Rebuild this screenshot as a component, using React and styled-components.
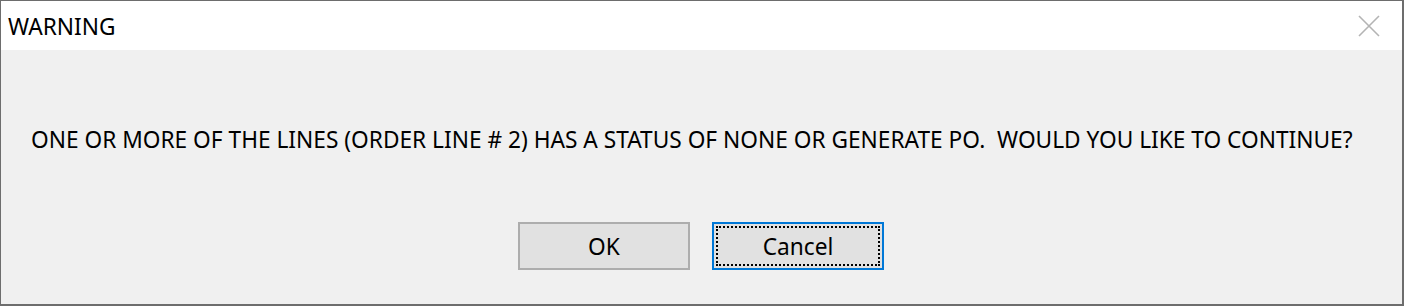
import React from "react";
import styled, { createGlobalStyle } from "styled-components";

const GlobalStyle = createGlobalStyle`
  html, body {
    margin: 0;
    padding: 0;
    background: #6d6d6d;
  }
  #root {
    width: 1404px;
    height: 306px;
    padding: 1px 2px 2px 1px;
    box-sizing: border-box;
  }
`;

const Dialog = styled.div`
  width: 100%;
  height: 100%;
  display: flex;
  flex-direction: column;
  background: #f0f0f0;
  font-family: "Noto Sans", "Open Sans", sans-serif;
  color: #000;
`;

const TitleBar = styled.div`
  height: 49px;
  background: #fff;
  display: flex;
  align-items: center;
  justify-content: space-between;
  padding: 0 22px 0 7px;
`;

const Title = styled.span`
  font-size: 22.7px;
  line-height: 1;
  padding-top: 3px;
`;

const CloseButton = styled.button`
  width: 22px;
  height: 22px;
  padding: 0;
  border: none;
  background: transparent;
  display: flex;
  align-items: center;
  justify-content: center;
`;

const Body = styled.div`
  flex: 1;
  display: flex;
  flex-direction: column;
  padding: 75px 30px 0;
`;

const Message = styled.p`
  margin: 0;
  font-size: 22.7px;
  line-height: 30px;
  white-space: pre;
`;

const Buttons = styled.div`
  display: flex;
  justify-content: center;
  gap: 22px;
  margin-top: 67px;
  padding-right: 1px;
`;

const Button = styled.button`
  position: relative;
  width: 172px;
  height: 48px;
  box-sizing: border-box;
  background: #e1e1e1;
  border: 2px solid ${(p) => (p.$focused ? "#0078d7" : "#adadad")};
  font-family: inherit;
  font-size: 22.7px;
  color: #000;
  padding: 0;
  ${(p) =>
    p.$focused &&
    `
    &::after {
      content: "";
      position: absolute;
      inset: 2px;
      border: 2px dotted #000;
    }
  `}
`;

const CloseIcon = () => (
  <svg width="22" height="22" viewBox="0 0 22 22">
    <path d="M1 1 L21 21 M21 1 L1 21" stroke="#b4b4b4" strokeWidth="1.6" fill="none" />
  </svg>
);

export default function App() {
  return (
    <>
      <GlobalStyle />
      <Dialog>
        <TitleBar>
          <Title>WARNING</Title>
          <CloseButton aria-label="Close">
            <CloseIcon />
          </CloseButton>
        </TitleBar>
        <Body>
          <Message>
            {"ONE OR MORE OF THE LINES (ORDER LINE # 2) HAS A STATUS OF NONE OR GENERATE PO.  WOULD YOU LIKE TO CONTINUE?"}
          </Message>
          <Buttons>
            <Button>OK</Button>
            <Button $focused>Cancel</Button>
          </Buttons>
        </Body>
      </Dialog>
    </>
  );
}
